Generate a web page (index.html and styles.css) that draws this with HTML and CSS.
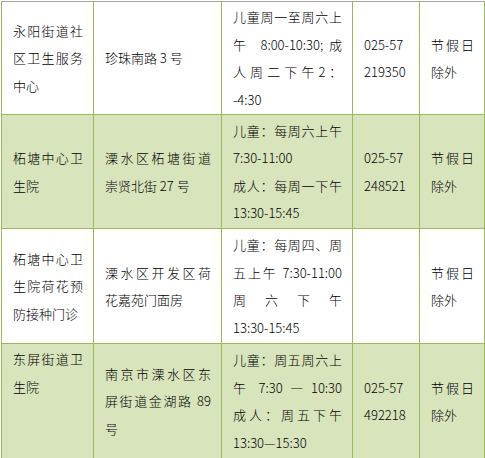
FILE: index.html
```html
<!DOCTYPE html>
<html lang="zh-CN">
<head>
<meta charset="utf-8">
<title>接种门诊</title>
<link rel="stylesheet" href="styles.css">
</head>
<body>
<table class="clinics">
  <colgroup>
    <col class="c-name">
    <col class="c-addr">
    <col class="c-time">
    <col class="c-tel">
    <col class="c-note">
  </colgroup>
  <tbody>
    <tr class="r1">
      <td>
        <div class="j">永阳街道社</div>
        <div class="j">区卫生服务</div>
        <div>中心</div>
      </td>
      <td><div>珍珠南路 3 号</div></td>
      <td>
        <div class="j">儿童周一至周六上</div>
        <div class="j">午 8:00-10:30;成</div>
        <div class="j">人 周 二 下 午 2 ：</div>
        <div>-4:30</div>
      </td>
      <td><div>025-57</div><div>219350</div></td>
      <td><div class="j">节假日</div><div>除外</div></td>
    </tr>
    <tr class="r2 alt">
      <td><div class="j">柘塘中心卫</div><div>生院</div></td>
      <td><div class="j">溧水区柘塘街道</div><div>崇贤北街 27 号</div></td>
      <td>
        <div class="j">儿童：每周六上午</div>
        <div>7:30-11:00</div>
        <div class="j">成人：每周一下午</div>
        <div>13:30-15:45</div>
      </td>
      <td><div>025-57</div><div>248521</div></td>
      <td><div class="j">节假日</div><div>除外</div></td>
    </tr>
    <tr class="r3">
      <td>
        <div class="j">柘塘中心卫</div>
        <div class="j">生院荷花预</div>
        <div>防接种门诊</div>
      </td>
      <td><div class="j">溧水区开发区荷</div><div>花嘉苑门面房</div></td>
      <td>
        <div class="j">儿童：每周四、周</div>
        <div class="j">五上午 7:30-11:00</div>
        <div class="j">周 六 下 午</div>
        <div>13:30-15:45</div>
      </td>
      <td></td>
      <td><div class="j">节假日</div><div>除外</div></td>
    </tr>
    <tr class="r4 alt">
      <td class="top"><div class="j">东屏街道卫</div><div>生院</div></td>
      <td>
        <div class="j">南京市溧水区东</div>
        <div class="j">屏街道金湖路 89</div>
        <div>号</div>
      </td>
      <td>
        <div class="j">儿童：周五周六上</div>
        <div class="j">午 7:30 — 10:30</div>
        <div class="j">成人：周五下午</div>
        <div>13:30—15:30</div>
      </td>
      <td><div>025-57</div><div>492218</div></td>
      <td><div class="j">节假日</div><div>除外</div></td>
    </tr>
  </tbody>
</table>
</body>
</html>
```
FILE: styles.css
```css
html, body {
  margin: 0;
  padding: 0;
  background: #ffffff;
}

body {
  padding: 1px 0 0 1px;
  font-family: "Noto Sans CJK SC", "Noto Sans", sans-serif;
  font-size: 13px;
  font-weight: 300;
  color: #000000;
}

.clinics {
  border-collapse: collapse;
  table-layout: fixed;
  width: 483px;
}

.c-name { width: 92px; }
.c-addr { width: 128px; }
.c-time { width: 131px; }
.c-tel  { width: 67px; }
.c-note { width: 65px; }

.clinics td {
  border: 1px solid #9bbb59;
  padding: 1px 10px 1px 11px;
  vertical-align: middle;
  line-height: 27.5px;
  text-align: left;
}

.clinics tr.r1 td {
  border-top-color: #a6a6a6;
}

.clinics td.top {
  vertical-align: top;
}

.alt td {
  background: #d8e4bc;
}

.r1 { height: 112px; }
.r2 { height: 114px; }
.r3 { height: 115px; }
.r4 { height: 115px; }

.j {
  text-align: justify;
  text-align-last: justify;
  white-space: nowrap;
}
```
